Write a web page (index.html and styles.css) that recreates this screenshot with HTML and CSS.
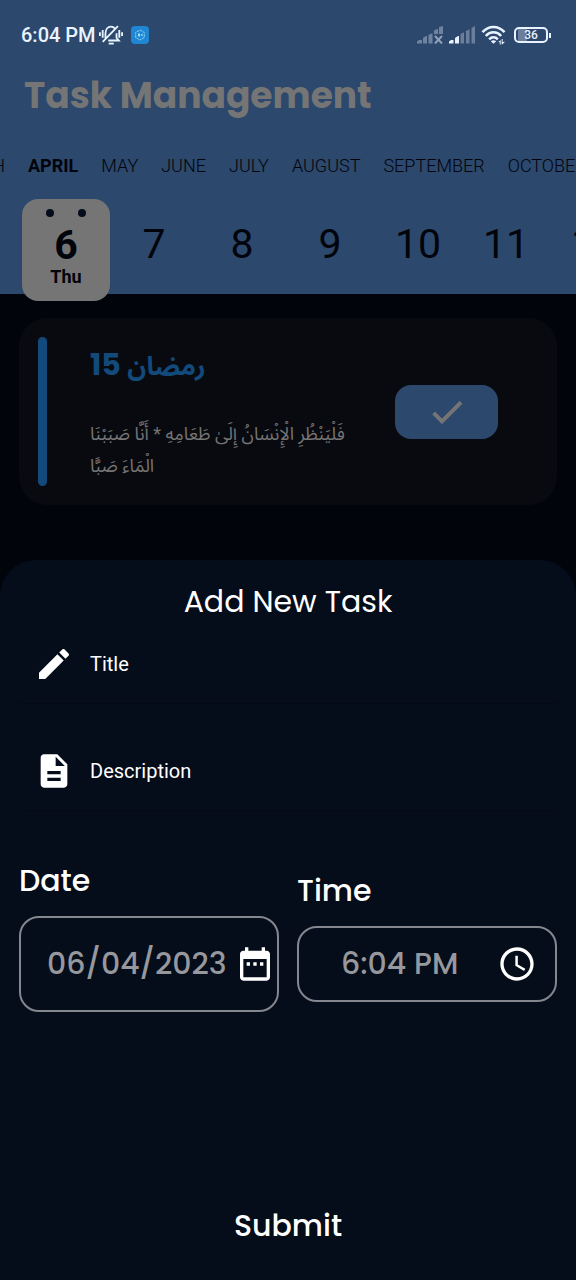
FILE: index.html
```html
<!DOCTYPE html>
<html lang="en">
<head>
<meta charset="utf-8">
<meta name="viewport" content="width=device-width, initial-scale=1">
<title>Task Management</title>
<link rel="stylesheet" href="styles.css">
</head>
<body>
<div class="screen">
  <header class="header">
    <div class="status">
      <span class="status-time">6:04 PM</span>
      <svg class="status-bell" viewBox="0 0 26 22" fill="none" stroke="currentColor" stroke-width="2" aria-hidden="true">
        <path d="M1 8v4M4 5.500v8.500M25 8v4M22 5.500v8.500" stroke-width="2"/>
        <path d="M7 15V9.500C7 5 9.500 2 13 2c1.800 0 3.200.7 4.300 2M19 9v5l2.500 3H10M4 18.500 20.500 1.500"/>
        <path d="M10.500 20.300h5.500" stroke-width="2"/>
      </svg>
      <svg class="status-app" viewBox="0 0 18 18" aria-hidden="true">
        <rect width="18" height="18" rx="4" fill="#1e86d2"/>
        <path d="M9 4l4.300 2.500v5L9 14l-4.300-2.500v-5z" fill="none" stroke="#8fd4f5" stroke-width="1" stroke-dasharray="2.500 .8"/>
        <path d="M7 7.500h2v3H7zM9.500 9l2-1.500v3z" fill="#9ddcf8"/>
      </svg>
      <span class="status-space"></span>
      <svg class="status-signal" viewBox="0 0 26 18" aria-hidden="true">
        <path d="M0 17.500v-2L2 14h3v3.500zM6 17.500V12l3-2h1v7.500zM11.500 17.500V9l3-1.500h1v10zM17 8V4.500L20 3h1v5zM22 8V1L26 0v8z" fill="#6f83a0"/>
        <path d="M18 10l7 7.500M25 10l-7 7.500" stroke="#8fa0b8" stroke-width="2"/>
      </svg>
      <svg class="status-signal" viewBox="0 0 26 18" aria-hidden="true">
        <path d="M0 17.500v-2L2 14h2.500v3.500zM6 17.500V12l3-2h1v7.500z" fill="#e8f3ff"/>
        <path d="M11.500 17.500V8l3-1.500h.5v11zM17 17.500V5l3-1.500h.5v14zM22.500 17.500V2L26 0v17.500z" fill="#6b7f9d"/>
      </svg>
      <svg class="status-wifi" viewBox="0 0 26 20" aria-hidden="true">
        <path d="M1.500 7C8-.2 18-.2 24.500 7M5 11c4.500-5 11.500-5 16 0M8.500 14.500c2.500-2.800 6.500-2.800 9 0" fill="none" stroke="#e8f3ff" stroke-width="2.600"/>
        <path d="M13 19l-2.800-2.600c1.600-1.400 4-1.400 5.600 0zM18 17.200l2.500-2v4.600h-1v-2.200zM21.500 14.200h1v3l2.500-.2-3 3h-.5z" fill="#e8f3ff"/>
      </svg>
      <span class="battery"><span class="battery-text">36</span></span>
    </div>
    <h1 class="title">Task Management</h1>
    <nav class="months" aria-label="Months">
      <span class="month month-prev">MARCH</span>
      <span class="month month-current">APRIL</span>
      <span class="month">MAY</span>
      <span class="month">JUNE</span>
      <span class="month">JULY</span>
      <span class="month">AUGUST</span>
      <span class="month">SEPTEMBER</span>
      <span class="month">OCTOBER</span>
    </nav>
    <div class="days">
      <button class="day day-current" type="button">
        <span class="rings"><i class="ring"></i><i class="ring"></i></span>
        <span class="day-number">6</span>
        <span class="day-name">Thu</span>
      </button>
      <button class="day" type="button">7</button>
      <button class="day" type="button">8</button>
      <button class="day" type="button">9</button>
      <button class="day" type="button">10</button>
      <button class="day" type="button">11</button>
      <button class="day" type="button">12</button>
    </div>
  </header>

  <main class="tasks">
    <article class="task">
      <span class="task-bar"></span>
      <div class="task-text" lang="ar" dir="rtl">
        <h2 class="task-title"><span class="task-month">رمضان</span> 15</h2>
        <p class="task-body">فَلْيَنْظُرِ الْإِنْسَانُ إِلَىٰ طَعَامِهِ * أَنَّا صَبَبْنَا<br>الْمَاءَ صَبًّا</p>
      </div>
      <button class="task-done" type="button" aria-label="Mark as done">
        <svg class="icon" viewBox="0 0 24 24" aria-hidden="true"><path d="M9 16.170 4.830 12l-1.420 1.410L9 19 21 7l-1.410-1.410z"/></svg>
      </button>
    </article>
  </main>

  <form class="sheet">
    <h2 class="sheet-title">Add New Task</h2>
    <label class="field">
      <svg class="icon" viewBox="0 0 24 24" aria-hidden="true"><path d="M3 17.250V21h3.750L17.810 9.940l-3.750-3.750L3 17.250zM20.710 7.040c.39-.39.39-1.020 0-1.410l-2.340-2.340c-.39-.39-1.020-.39-1.410 0l-1.830 1.830 3.750 3.750 1.830-1.830z"/></svg>
      <input class="field-input" type="text" placeholder="Title" aria-label="Title">
    </label>
    <label class="field">
      <svg class="icon" viewBox="0 0 24 24" aria-hidden="true"><path d="M14 2H6c-1.100 0-1.990.9-1.990 2L4 20c0 1.100.89 2 1.990 2H18c1.100 0 2-.9 2-2V8l-6-6zm2 16H8v-2h8v2zm0-4H8v-2h8v2zm-3-5V3.500L18.500 9H13z"/></svg>
      <input class="field-input" type="text" placeholder="Description" aria-label="Description">
    </label>
    <div class="when">
      <div class="picker">
        <label class="picker-label" for="date">Date</label>
        <div class="picker-box picker-date">
          <input class="picker-input" id="date" type="text" value="06/04/2023">
          <button class="picker-button" type="button" aria-label="Pick a date">
            <svg class="icon" viewBox="0 0 24 24" aria-hidden="true"><path d="M9 11H7v2h2v-2zm4 0h-2v2h2v-2zm4 0h-2v2h2v-2zm2-7h-1V2h-2v2H8V2H6v2H5c-1.110 0-1.990.9-1.990 2L3 20c0 1.100.89 2 2 2h14c1.100 0 2-.9 2-2V6c0-1.100-.9-2-2-2zm0 16H5V9h14v11z"/></svg>
          </button>
        </div>
      </div>
      <div class="picker">
        <label class="picker-label" for="time">Time</label>
        <div class="picker-box picker-time">
          <input class="picker-input" id="time" type="text" value="6:04 PM">
          <button class="picker-button" type="button" aria-label="Pick a time">
            <svg class="icon" viewBox="0 0 24 24" aria-hidden="true"><path d="M11.990 2C6.470 2 2 6.480 2 12s4.470 10 9.990 10C17.520 22 22 17.520 22 12S17.520 2 11.990 2zM12 20c-4.420 0-8-3.580-8-8s3.580-8 8-8 8 3.580 8 8-3.580 8-8 8zm.5-13H11v6l5.250 3.150.75-1.230-4.500-2.670z"/></svg>
          </button>
        </div>
      </div>
    </div>
    <button class="submit" type="submit">Submit</button>
  </form>
</div>
</body>
</html>
```
FILE: styles.css
```css
* {
  box-sizing: border-box;
}

body {
  margin: 0;
  background: #02040c;
  font-family: Roboto, "Noto Sans", sans-serif;
}

button,
input {
  margin: 0;
  padding: 0;
  border: 0;
  background: none;
  color: inherit;
  font: inherit;
}

h1,
h2,
p {
  margin: 0;
}

.screen {
  display: flex;
  flex-direction: column;
  min-height: 100vh;
  overflow: hidden;
}

.icon {
  display: block;
  flex: none;
  width: 40px;
  height: 40px;
  fill: currentColor;
}

.header {
  background: #2c486c;
  color: #02040c;
}

.status {
  display: flex;
  align-items: center;
  gap: 6px;
  height: 68px;
  padding: 2px 28px 0 21px;
  color: #e8f3ff;
}

.status-time {
  font-size: 20px;
  font-weight: 500;
}

.status-bell {
  width: 24px;
  height: 22px;
  margin-left: -3px;
}

.status-app {
  width: 18px;
  height: 18px;
  margin-left: 2px;
}

.status-space {
  flex: 1;
}

.status-signal {
  width: 26px;
  height: 18px;
}

.status-wifi {
  width: 25px;
  height: 20px;
}

.battery {
  position: relative;
  display: flex;
  align-items: center;
  justify-content: center;
  width: 34px;
  height: 16px;
  margin-left: 2px;
  border: 2px solid #e8f3ff;
  border-radius: 5px;
  background: linear-gradient(to right, #2c486c 2px, #6b7f9d 2px, #6b7f9d 11px, #2c486c 11px);
  font-size: 12px;
  font-weight: 500;
}

.battery::after {
  content: "";
  position: absolute;
  top: 4px;
  right: -5px;
  width: 2px;
  height: 5px;
  background: #e8f3ff;
}

.title {
  padding: 0 24px;
  color: #757575;
  font-family: Poppins, Inter, sans-serif;
  font-size: 36px;
  font-weight: 700;
  line-height: 56px;
}

.months {
  display: flex;
  gap: 23px;
  height: 75px;
  padding-top: 30px;
  overflow: hidden;
  font-size: 18px;
  font-weight: 300;
  line-height: 24px;
}

.month {
  flex: none;
}

.month-prev {
  display: flex;
  justify-content: flex-end;
  width: 5px;
}

.month-current {
  font-weight: 700;
}

.days {
  display: flex;
  margin-bottom: -7px;
  padding-left: 22px;
}

.day {
  flex: none;
  width: 88px;
  height: 102px;
  padding-bottom: 12px;
  font-size: 41px;
}

.day-current {
  display: flex;
  flex-direction: column;
  align-items: center;
  padding: 10px 0 0;
  border-radius: 16px;
  background: #757575;
  font-weight: 700;
}

.rings {
  display: flex;
  gap: 24px;
}

.ring {
  width: 8px;
  height: 8px;
  border-radius: 50%;
  background: #050c1b;
}

.day-number {
  padding-top: 8px;
  line-height: 40px;
}

.day-name {
  font-size: 18px;
  line-height: 24px;
}

.tasks {
  padding: 24px 19px 55px;
}

.task {
  display: flex;
  align-items: center;
  padding: 19px 59px 19px 19px;
  border-radius: 28px;
  background: #090a0f;
}

.task-bar {
  align-self: stretch;
  width: 9px;
  border-radius: 5px;
  background: #124a7c;
}

.task-text {
  flex: 1;
  min-height: 149px;
  padding-left: 43px;
  text-align: left;
}

.task-title {
  color: #124a7c;
  font-family: Poppins, Inter, "Noto Sans Arabic", "DejaVu Sans", sans-serif;
  font-size: 30px;
  font-weight: 700;
  line-height: 56px;
}

.task-month {
  font-size: 26px;
}

.task-body {
  padding-top: 24px;
  color: #757575;
  font-family: Roboto, "Noto Sans Arabic", "DejaVu Sans", sans-serif;
  font-size: 18px;
  line-height: 32px;
}

.task-done {
  display: flex;
  align-items: center;
  justify-content: center;
  width: 103px;
  height: 54px;
  border-radius: 16px;
  background: #2c486c;
  color: #757575;
}

.task-done .icon {
  stroke: currentColor;
  stroke-width: 0.5;
}

.sheet {
  display: flex;
  flex: 1;
  flex-direction: column;
  padding: 16px 19px 26px;
  border-radius: 36px 36px 0 0;
  background: #050c1a;
  color: #fff;
}

.sheet-title {
  font-family: Poppins, Inter, sans-serif;
  font-size: 30px;
  font-weight: 400;
  line-height: 52px;
  text-align: center;
}

.field {
  display: flex;
  align-items: center;
  gap: 16px;
  height: 76px;
  margin-bottom: 31px;
  padding: 0 15px 4px;
  border-bottom: 1px solid #040914;
}

.field-input {
  flex: 1;
  min-width: 0;
  font-size: 20px;
}

.field-input::placeholder {
  color: #fff;
  opacity: 1;
}

.when {
  display: flex;
  align-items: center;
  gap: 18px;
  margin-top: 16px;
}

.picker {
  flex: 1;
  min-width: 0;
  font-family: Poppins, Inter, sans-serif;
  font-size: 30px;
  font-weight: 500;
}

.picker-label {
  display: block;
  padding-bottom: 12px;
  line-height: 46px;
}

.picker-box {
  display: flex;
  align-items: center;
  height: 76px;
  border: 2px solid #85878f;
  border-radius: 20px;
}

.picker-date {
  height: 96px;
  padding: 0 2px 0 26px;
}

.picker-time {
  padding: 0 18px 0 42px;
}

.picker-input {
  flex: 1;
  min-width: 0;
  color: #96989e;
}

.submit {
  align-self: center;
  margin-top: auto;
  font-family: Poppins, Inter, sans-serif;
  font-size: 30px;
  font-weight: 500;
  line-height: 56px;
}
```
